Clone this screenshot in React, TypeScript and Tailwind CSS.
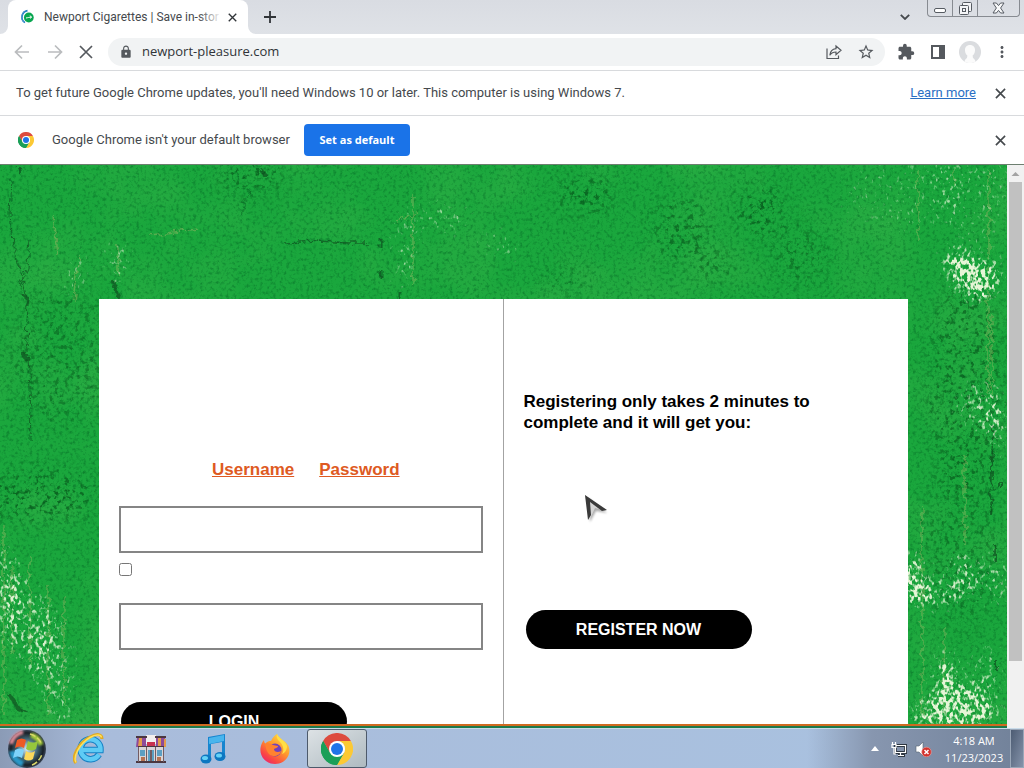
import React from 'react';
import { MdExtension, MdLock, MdMoreVert, MdStarBorder } from 'react-icons/md';

function CrossIcon({ className }: { className: string }) {
  return (
    <svg viewBox="0 0 12 12" className={className} fill="none" stroke="currentColor" strokeWidth="1.8" aria-hidden="true">
      <path d="M1 1l10 10M11 1L1 11" />
    </svg>
  );
}

function ChromeLogo({ className }: { className: string }) {
  return (
    <svg viewBox="0 0 48 48" className={className} aria-hidden="true">
      <path d="M24 24L3.2 12A24 24 0 0 1 44.8 12L24 12z" fill="#dd4b3e" />
      <path d="M3.2 12A24 24 0 0 0 24 48L34.4 30 24 24 13.6 30z" fill="#1a9f58" />
      <path d="M44.8 12A24 24 0 0 1 24 48L34.4 30A12 12 0 0 0 24 12z" fill="#fcc934" />
      <path d="M3.2 12L13.6 30 24 24V12z" fill="#dd4b3e" />
      <path d="M3.2 12A24 24 0 0 0 24 48L34.4 30A12 12 0 0 1 13.6 30z" fill="#1a9f58" />
      <circle cx="24" cy="24" r="12" fill="#fff" />
      <circle cx="24" cy="24" r="9" fill="#1f74e8" />
    </svg>
  );
}

function TabStrip() {
  return (
    <header className="flex h-[34px] shrink-0 items-stretch bg-gradient-to-b from-[#d9dce2] to-[#dfe2e7] pl-2">
      <div className="relative flex w-60 items-center rounded-t-lg bg-white pl-3 pr-[10px] text-[#45494d]">
        <svg viewBox="0 0 8 8" className="absolute -left-2 bottom-0 h-2 w-2" aria-hidden="true">
          <path d="M8 0v8H0A8 8 0 0 0 8 0z" fill="#fff" />
        </svg>
        <svg viewBox="0 0 8 8" className="absolute -right-2 bottom-0 h-2 w-2" aria-hidden="true">
          <path d="M0 0v8h8A8 8 0 0 1 0 0z" fill="#fff" />
        </svg>
        <svg viewBox="0 0 16 16" className="h-4 w-4 shrink-0" fill="none" aria-hidden="true">
          <circle cx="8.800" cy="8.500" r="4.900" fill="#08a650" />
          <path d="M6 9c2-.3 3-.8 5.500-.9M9.800 6.600l1.800 1.500-1.500 1.300" stroke="#fff" strokeWidth="1" />
          <path d="M7.500 1.600a6.600 6.600 0 0 0-2.600 12" stroke="#1d7bc2" strokeWidth="1.6" />
          <path d="M4.500 2.200a7.400 7.400 0 0 0-.8 11" stroke="#4f97d2" strokeWidth="1" />
        </svg>
        <span className="relative ml-2 flex-1 overflow-hidden whitespace-nowrap font-[Roboto,'Segoe_UI',sans-serif] text-xs">
          Newport Cigarettes | Save in-stor
          <span className="absolute inset-y-0 right-0 w-6 bg-gradient-to-r from-transparent to-white" />
        </span>
        <button type="button" aria-label="Close tab" className="ml-1 flex h-4 w-3 items-center justify-center text-[#303438]">
          <CrossIcon className="h-[9px] w-[9px]" />
        </button>
      </div>
      <button type="button" aria-label="New tab" className="ml-2 w-7 text-[#303438]">
        <svg viewBox="0 0 12 12" className="mx-auto h-3 w-3" stroke="currentColor" strokeWidth="1.8" aria-hidden="true">
          <path d="M6 0v12M0 6h12" />
        </svg>
      </button>
      <button type="button" aria-label="Search tabs" className="ml-auto mr-3 w-5 text-[#45494d]">
        <svg viewBox="0 0 10 6" className="mx-auto h-[6px] w-[10px]" fill="none" stroke="currentColor" strokeWidth="1.8" aria-hidden="true">
          <path d="M.8.8L5 5 9.2.8" />
        </svg>
      </button>
      <div className="mr-1 flex h-[17px] overflow-hidden rounded-b border border-t-0 border-[#878b91] text-[#565b62]">
        <button type="button" aria-label="Minimize" className="flex w-6 items-end justify-center pb-[3px]">
          <svg viewBox="0 0 12 5" className="h-[5px] w-3" fill="#fff" stroke="currentColor" aria-hidden="true">
            <rect x=".5" y=".5" width="11" height="4" rx="1.5" />
          </svg>
        </button>
        <button type="button" aria-label="Restore" className="flex w-[26px] items-center justify-center border-x border-[#878b91]">
          <svg viewBox="0 0 13 13" className="h-[13px] w-[13px]" fill="#f4f5f7" stroke="currentColor" aria-hidden="true">
            <rect x="3.5" y=".5" width="9" height="9" rx="1" />
            <rect x=".5" y="3.5" width="9" height="9" rx="1" />
            <rect x="3.5" y="6.5" width="3" height="3" />
          </svg>
        </button>
        <button type="button" aria-label="Close window" className="flex w-[41px] items-center justify-center">
          <svg viewBox="0 0 13 12" className="h-3 w-[13px]" fill="#f8f9fa" stroke="currentColor" aria-hidden="true">
            <path d="M1 1h3.400l2.100 2.600L8.600 1H12L8.600 6 12 11H8.600L6.500 8.400 4.400 11H1l3.400-5z" />
          </svg>
        </button>
      </div>
    </header>
  );
}

function Toolbar() {
  return (
    <div className="flex h-9 shrink-0 items-center bg-white text-[#55595e]">
      <div className="flex w-[108px] shrink-0 justify-between pl-[14px] pr-[15px]">
        <button type="button" aria-label="Back" className="text-[#babcbe]">
          <svg viewBox="0 0 16 16" className="h-4 w-4" fill="none" stroke="currentColor" strokeWidth="1.7" aria-hidden="true">
            <path d="M15 8H2M8 1.500L1.500 8 8 14.500" />
          </svg>
        </button>
        <button type="button" aria-label="Forward" className="text-[#babcbe]">
          <svg viewBox="0 0 16 16" className="h-4 w-4" fill="none" stroke="currentColor" strokeWidth="1.7" aria-hidden="true">
            <path d="M1 8h13M8 1.500L14.500 8 8 14.500" />
          </svg>
        </button>
        <button type="button" aria-label="Stop loading">
          <svg viewBox="0 0 14 14" className="h-[14px] w-[14px]" fill="none" stroke="currentColor" strokeWidth="1.7" aria-hidden="true">
            <path d="M1 1l12 12M13 1L1 13" />
          </svg>
        </button>
      </div>
      <div className="flex h-7 flex-1 items-center rounded-full bg-[#f1f3f4] pl-[11px] pr-[10px]">
        <MdLock className="h-[14px] w-[14px] shrink-0" />
        <input
          type="text"
          aria-label="Address"
          defaultValue="newport-pleasure.com"
          className="ml-[9px] min-w-0 flex-1 bg-transparent text-[13px] text-[#303438] outline-none"
        />
        <button type="button" aria-label="Share this page">
          <svg viewBox="0 0 16 16" className="h-4 w-4" fill="none" stroke="currentColor" strokeWidth="1.2" aria-hidden="true">
            <path d="M1 4.500v10h11.500v-3" />
            <path d="M10 2l5 4.300-5 4.300V8c-2.800 0-4.700 1-6.200 3.200C4.200 7.300 6.500 5 10 4.600z" />
          </svg>
        </button>
        <button type="button" aria-label="Bookmark this tab" className="ml-[15px]">
          <MdStarBorder className="h-[18px] w-[18px]" />
        </button>
      </div>
      <div className="ml-3 mr-[13px] flex shrink-0 items-center">
        <button type="button" aria-label="Extensions">
          <MdExtension className="h-[18px] w-[18px]" />
        </button>
        <button type="button" aria-label="Side panel" className="ml-4">
          <svg viewBox="0 0 14 14" className="h-[14px] w-[14px]" aria-hidden="true">
            <path d="M0 0h14v14H0zM2 2v10h6V2z" fill="currentColor" fillRule="evenodd" />
          </svg>
        </button>
        <button type="button" aria-label="Profile" className="ml-[14px]">
          <svg viewBox="0 0 22 22" className="h-[22px] w-[22px]" aria-hidden="true">
            <circle cx="11" cy="11" r="11" fill="#dadcdf" />
            <path d="M11 4c-3.500 0-5.200 2.400-5 5.500.1 2.400 1 4 2.400 5L8 17c-1 .8-2 1.500-2.500 3.500a11 11 0 0 0 11 0C16 18.500 15 17.800 14 17l-.4-2.500c1.400-1 2.300-2.600 2.400-5C16.200 6.400 14.500 4 11 4z" fill="#fbfbfb" />
          </svg>
        </button>
        <button type="button" aria-label="Customize and control" className="ml-3">
          <MdMoreVert className="h-[18px] w-[18px]" />
        </button>
      </div>
    </div>
  );
}

function InfoBars() {
  return (
    <div className="shrink-0 font-[Roboto,'Segoe_UI',sans-serif] text-[13px] text-[#45494d]">
      <div className="flex h-[45px] items-center border-t border-[#d8dadd] bg-white pl-4 pr-[18px]">
        <p>To get future Google Chrome updates, you'll need Windows 10 or later. This computer is using Windows 7.</p>
        <a href="#learn-more" className="ml-auto text-[#2a6fc4] underline">Learn more</a>
        <button type="button" aria-label="Dismiss update notice" className="ml-[19px]">
          <CrossIcon className="h-[11px] w-[11px]" />
        </button>
      </div>
      <div className="flex h-[50px] items-center border-b border-t border-b-[#6d7f70] border-t-[#d8dadd] bg-white pl-[18px] pr-[18px]">
        <ChromeLogo className="h-4 w-4" />
        <p className="ml-[18px] min-w-60">Google Chrome isn't your default browser</p>
        <button type="button" className="ml-3 h-8 w-[106px] rounded bg-[#1a73e8] font-['Open_Sans','Segoe_UI',sans-serif] text-[11px] font-bold text-white">
          Set as default
        </button>
        <button type="button" aria-label="Dismiss default browser prompt" className="ml-auto">
          <CrossIcon className="h-[11px] w-[11px]" />
        </button>
      </div>
    </div>
  );
}

// Green painted concrete: grain, cracks and worn white patches
function PaintedWall() {
  return (
    <svg
      viewBox="0 0 1007 559"
      preserveAspectRatio="xMidYMin slice"
      className="absolute inset-0 h-full w-full"
      aria-hidden="true"
    >
      <defs>
        <filter id="grain" x="0" y="0" width="100%" height="100%" colorInterpolationFilters="sRGB">
          <feTurbulence type="fractalNoise" baseFrequency="0.3" numOctaves="3" seed="4" />
          <feColorMatrix values="0 0 0 0 0.02  0 0 0 0 0.42  0 0 0 0 0.15  3 0 0 0 -1.45" />
        </filter>
        <filter id="light" x="0" y="0" width="100%" height="100%" colorInterpolationFilters="sRGB">
          <feTurbulence type="fractalNoise" baseFrequency="0.012" numOctaves="4" seed="9" />
          <feColorMatrix values="0 0 0 0 0.23  0 0 0 0 0.7  0 0 0 0 0.29  3 0 0 0 -1.3" />
        </filter>
        <filter id="pits" x="-20%" y="-20%" width="140%" height="140%" colorInterpolationFilters="sRGB">
          <feGaussianBlur in="SourceGraphic" stdDeviation="10" result="s" />
          <feTurbulence type="fractalNoise" baseFrequency="0.2" numOctaves="3" seed="12" />
          <feColorMatrix values="0 0 0 0 0.02  0 0 0 0 0.32  0 0 0 0 0.1  6 0 0 0 -3.300" />
          <feComposite operator="in" in2="s" />
        </filter>
        <filter id="worn" x="0" y="0" width="1007" height="559" filterUnits="userSpaceOnUse" colorInterpolationFilters="sRGB">
          <feGaussianBlur in="SourceGraphic" stdDeviation="9" result="s" />
          <feTurbulence type="fractalNoise" baseFrequency="0.28 0.2" numOctaves="2" seed="21" />
          <feColorMatrix values="0 0 0 0 1  0 0 0 0 1  0 0 0 0 1  1 0 0 0 0" result="n" />
          <feComposite in="n" in2="s" operator="arithmetic" k2="5" k3="2" k4="-3.900" />
          <feComposite in2="s" operator="in" result="c" />
          <feColorMatrix in="c" values="0 0 0 0 0.9  0 0 0 0 0.96  0 0 0 0 0.84  0 0 0 1.300 0" />
        </filter>
        <filter id="rough" x="-30%" y="-30%" width="160%" height="160%">
          <feTurbulence type="fractalNoise" baseFrequency="0.15" numOctaves="3" seed="3" />
          <feDisplacementMap in="SourceGraphic" scale="9" />
        </filter>
      </defs>
      <rect width="1007" height="559" fill="#1aa73d" />
      <rect width="1007" height="559" filter="url(#light)" opacity="0.4" />
      <rect width="1007" height="559" filter="url(#grain)" opacity="0.5" />
      <g filter="url(#pits)" opacity="0.75">
        <ellipse cx="250" cy="10" rx="34" ry="18" />
        <ellipse cx="60" cy="190" rx="50" ry="70" opacity="0.6" />
        <ellipse cx="760" cy="45" rx="26" ry="26" />
        <ellipse cx="800" cy="90" rx="30" ry="30" opacity="0.7" />
        <ellipse cx="585" cy="30" rx="30" ry="20" />
        <ellipse cx="680" cy="65" rx="30" ry="35" opacity="0.8" />
        <ellipse cx="715" cy="100" rx="20" ry="16" opacity="0.8" />
        <ellipse cx="565" cy="115" rx="22" ry="14" opacity="0.8" />
        <ellipse cx="965" cy="220" rx="40" ry="110" opacity="0.8" />
        <ellipse cx="960" cy="380" rx="40" ry="90" opacity="0.6" />
        <ellipse cx="40" cy="330" rx="60" ry="26" />
      </g>
      <g fill="none" stroke="#0b421b" filter="url(#rough)" opacity="0.6">
        <path d="M12 15l-2 35 3 28 8 30 7 32-2 35 3 30 2 40-1 30" />
        <path d="M30 75l-2 28-8 18" />
        <path d="M284 78l35-2 30 2h18" strokeWidth="1.500" />
        <path d="M249 25l-7 25" strokeWidth="2" opacity="0.5" />
        <path d="M381 74v9M381 105v8M113 116l6 18M400 127v8" strokeWidth="3" />
        <path d="M261 5l4 5M20 3l1 6M26 131l3 12M24 188l3 8" strokeWidth="4" />
        <path d="M10 530l8 14 9 4" strokeWidth="4" />
        <path d="M995 380v16M996 495v10M993 260l-2 90M1000 315v8" strokeWidth="2" />
      </g>
      <g stroke="#94b663" filter="url(#rough)" opacity="0.5">
        <path d="M413 30v90M53 50l4 40M118 80v30M80 90l-6 45M150 70l48-6M395 55l24-6M918 5v70M954 0v20M989 5v90" strokeWidth="1.500" />
        <path d="M4 360v190M12 400v90M30 390v110M48 420v130M64 430v110M965 290v90M988 100v130M922 340v210M944 460v90M992 150v80" strokeWidth="1.500" />
      </g>
      <g filter="url(#worn)" fill="#fff">
        <ellipse cx="968" cy="110" rx="20" ry="34" transform="rotate(-40 968 110)" />
        <ellipse cx="966" cy="106" rx="14" ry="26" transform="rotate(-40 966 106)" />
        <ellipse cx="992" cy="110" rx="12" ry="26" opacity="0.7" />
        <ellipse cx="6" cy="430" rx="12" ry="60" opacity="0.7" />
        <ellipse cx="28" cy="460" rx="22" ry="60" opacity="0.55" transform="rotate(-12 28 460)" />
        <ellipse cx="56" cy="500" rx="22" ry="70" opacity="0.55" transform="rotate(-5 56 500)" />
        <ellipse cx="912" cy="415" rx="14" ry="30" />
        <ellipse cx="934" cy="430" rx="24" ry="16" opacity="0.7" />
        <ellipse cx="964" cy="412" rx="18" ry="28" opacity="0.7" />
        <ellipse cx="998" cy="412" rx="14" ry="34" opacity="0.6" />
        <ellipse cx="962" cy="545" rx="40" ry="22" opacity="0.9" />
        <ellipse cx="946" cy="515" rx="12" ry="34" />
        <ellipse cx="985" cy="510" rx="18" ry="34" opacity="0.6" />
        <ellipse cx="980" cy="240" rx="26" ry="28" opacity="0.6" />
        <ellipse cx="998" cy="260" rx="10" ry="36" opacity="0.7" />
        <ellipse cx="900" cy="30" rx="60" ry="40" opacity="0.35" />
        <ellipse cx="975" cy="20" rx="40" ry="60" opacity="0.4" />
        <ellipse cx="405" cy="85" rx="12" ry="46" opacity="0.6" />
        <ellipse cx="445" cy="52" rx="28" ry="18" opacity="0.5" />
        <ellipse cx="500" cy="80" rx="26" ry="12" opacity="0.55" />
        <ellipse cx="118" cy="95" rx="10" ry="30" opacity="0.7" />
        <ellipse cx="75" cy="110" rx="12" ry="26" opacity="0.55" />
        <ellipse cx="925" cy="550" rx="20" ry="20" opacity="0.7" />
      </g>
    </svg>
  );
}

function LoginPage() {
  return (
    <main className="relative min-h-0 flex-1 overflow-hidden bg-[#1ba43d] px-[99px] pt-[134px] font-['Liberation_Sans',Arial,sans-serif]">
      <PaintedWall />
      <div className="relative grid min-h-[520px] grid-cols-2 bg-white">
        <form className="border-r border-[#a3a3a3] px-5 pt-40">
          <nav className="flex justify-center gap-[25px] pl-[10px] text-[17px] font-bold leading-[22px] text-[#de5a22]">
            <a href="#username" className="underline">Username</a>
            <a href="#password" className="underline">Password</a>
          </nav>
          <input type="text" aria-label="Username" className="mt-[25px] block h-[47px] w-full border-2 border-[#858585] bg-white px-3" />
          <input type="checkbox" aria-label="Remember me" className="mt-[10px] block h-[13px] w-[13px]" />
          <input type="password" aria-label="Password" className="mt-[27px] block h-[47px] w-full border-2 border-[#858585] bg-white px-3" />
          <button type="submit" className="ml-[2px] mt-[52px] block h-[39px] w-[226px] rounded-full bg-black text-base font-bold text-white">
            LOGIN
          </button>
        </form>
        <section className="px-5 pt-[92px]">
          <h2 className="max-w-[300px] text-[17px] font-bold leading-[21px] text-black">
            Registering only takes 2 minutes to complete and it will get you:
          </h2>
          <button type="button" className="ml-[2px] mt-[177px] block h-[39px] w-[226px] rounded-full bg-black text-base font-bold text-white">
            REGISTER NOW
          </button>
        </section>
      </div>
      <svg viewBox="0 0 26 32" className="absolute left-[583px] top-[328px] h-8 w-[26px]" aria-hidden="true">
        <defs>
          <filter id="soft">
            <feGaussianBlur stdDeviation="1.300" />
          </filter>
        </defs>
        <path d="M5 5l19 15-11-2-6 11z" fill="#777" opacity="0.6" filter="url(#soft)" />
        <path d="M2 2l21 16-11-3-5 11z" fill="#d4d4d4" />
        <path d="M2 2l22 15-5 1L7 9 8 22l-3 5z" fill="#3a3a3a" />
      </svg>
    </main>
  );
}

function ScrollBar() {
  return (
    <div className="flex w-[17px] shrink-0 flex-col items-center bg-[#f1f1f1]" aria-hidden="true">
      <svg viewBox="0 0 17 17" className="h-[17px] w-[17px] shrink-0">
        <path d="M4.500 11L8.500 7l4 4z" fill="#a3a3a3" />
      </svg>
      <div className="h-[85%] w-[13px] bg-[#c1c1c1]" />
    </div>
  );
}

function StartOrb() {
  return (
    <svg viewBox="0 0 40 40" className="h-10 w-10" aria-hidden="true">
      <defs>
        <radialGradient id="orb">
          <stop offset="0" stopColor="#d8efff" />
          <stop offset="0.55" stopColor="#3f6270" />
          <stop offset="0.85" stopColor="#182027" />
          <stop offset="1" stopColor="#3c4757" />
        </radialGradient>
        <filter id="glow">
          <feGaussianBlur stdDeviation="1.200" />
        </filter>
      </defs>
      <circle cx="20" cy="20" r="19" fill="url(#orb)" />
      <g fill="none" filter="url(#glow)">
        <path d="M4 15A17 17 0 0 1 16 3" stroke="#d88a95" strokeWidth="4" />
        <path d="M24 6a15 15 0 0 1 10 10" stroke="#a5ce3c" strokeWidth="5" />
        <path d="M5 22a16 16 0 0 0 11 13" stroke="#2b98c8" strokeWidth="6" />
      </g>
      <path d="M25 36a17 17 0 0 0 10-11M23 5a17 17 0 0 1 11 9" stroke="#d9d76a" strokeWidth="1.500" fill="none" strokeDasharray="6 2" />
      <path d="M10 11c3-2 6-2 9 0l-2 8c-3-2-6-2-9 0z" fill="#ee5a25" />
      <path d="M21 12c3 2 6 2 10 0l-2 8c-4 2-7 2-10 0z" fill="#96c83c" />
      <path d="M8 21c3-2 6-2 9 0l-2 8c-3-2-6-2-9 0z" fill="#7fd3fa" />
      <path d="M19 22c3 2 6 2 9 0l-2 8c-3 2-6 2-9 0z" fill="#fbd95c" />
    </svg>
  );
}

function ExplorerIcon() {
  return (
    <svg viewBox="0 0 32 32" className="h-8 w-8" fill="none" aria-hidden="true">
      <path d="M26 21.500a10 10 0 1 1 1.500-4.500H9" stroke="#1681c4" strokeWidth="6.500" />
      <path d="M26 21.500a10 10 0 1 1 1.500-4.500H9" stroke="#5ecbf5" strokeWidth="4.500" />
      <path d="M3 30C-2 25 5 10 17 4c7-4 12-3 12 2" stroke="#e0aa22" strokeWidth="3" />
      <path d="M3 29.500C0 24 6 11 17 4.500c6-3.500 11-3 11.500 0" stroke="#ffe05c" strokeWidth="1.500" />
    </svg>
  );
}

function ShopIcon() {
  return (
    <svg viewBox="0 0 32 32" className="h-8 w-8" aria-hidden="true">
      <path d="M3 14h26v15H3z" fill="#d9d5d8" />
      <path d="M11 2h10v9H11z" fill="#f3efee" />
      <path d="M2 5h9v9H1zM21 5h9l1 9H21z" fill="#8d4b9a" />
      <path d="M4 5h3v9H3zM23 5h3v9h-3zM29 6h2v8h-2z" fill="#e39a4b" />
      <path d="M12 9h8v5h-8z" fill="#c8324e" />
      <path d="M1 3h11v2H1zM20 3h11v2H20zM3 13h26v1H3zM1 28h30v2H1z" fill="#4b3740" />
      <path d="M13 17h6v11h-6zM5 17h5v6H5zM22 17h5v6h-5z" fill="#5c9fc3" />
      <path d="M15 17h2v11h-2zM3 14h1v15H3zM11 14h1v14h-1zM20 14h1v14h-1zM28 14h1v15h-1z" fill="#735c62" />
      <path d="M6 24h4v4H6zM22 24h4v4h-4z" fill="#b57252" />
    </svg>
  );
}

function MusicIcon() {
  return (
    <svg viewBox="0 0 28 32" className="h-8 w-7" aria-hidden="true">
      <path d="M9 4l17-3v23h-3V9L12 11v16H9z" fill="#1685cf" />
      <path d="M10 5l15-3v6L10 11z" fill="#49b5ed" />
      <ellipse cx="7" cy="26" rx="5.500" ry="4.500" fill="#0d77c1" />
      <ellipse cx="21" cy="23.500" rx="5.500" ry="4.500" fill="#0d77c1" />
      <ellipse cx="6" cy="25" rx="3" ry="2" fill="#65d2f7" />
      <ellipse cx="20" cy="22.500" rx="3" ry="2" fill="#65d2f7" />
    </svg>
  );
}

function FirefoxIcon() {
  return (
    <svg viewBox="0 0 32 32" className="h-8 w-8" aria-hidden="true">
      <defs>
        <linearGradient id="fox" x1="0.9" y1="0" x2="0.2" y2="1">
          <stop offset="0" stopColor="#ffe84a" />
          <stop offset="0.45" stopColor="#ff9a2b" />
          <stop offset="0.8" stopColor="#fa4545" />
          <stop offset="1" stopColor="#e92271" />
        </linearGradient>
      </defs>
      <path d="M5 7c0 2 .5 3 1.500 3.500C8 8.500 10 8 12 8c2-4 4-6 6-7 1 4 9 7 11.500 12C33 22 26 31 16 31S.5 23 1.500 15C2 12 3 9 5 7z" fill="url(#fox)" />
      <path d="M18 1c-1 4 1 6 3 8 4 4 4 9 2 12 3-1 5-4 5-8-1-5-8-7-10-12z" fill="#ffdf45" />
      <circle cx="16" cy="17" r="6.500" fill="#7141bb" />
      <path d="M6 11c4-2 6 0 8 1l5 1c0 2-3 2-4 3 0 3 4 4 7 2-1 5-8 7-12 3-3-3-3-7-4-10z" fill="#ff8230" />
    </svg>
  );
}

const apps = [
  { name: 'Internet Explorer', icon: <ExplorerIcon /> },
  { name: 'Store', icon: <ShopIcon /> },
  { name: 'Music', icon: <MusicIcon /> },
  { name: 'Firefox', icon: <FirefoxIcon /> },
];

function Taskbar() {
  return (
    <footer className="flex h-10 shrink-0 items-stretch border-t border-[#c9dbe9] bg-gradient-to-r from-[#8b9bb6] via-[#a9bcdb] via-10% to-[#a9c2e0]">
      <button type="button" aria-label="Start" className="ml-[7px] w-10">
        <StartOrb />
      </button>
      <div className="ml-[11px] flex">
        {apps.map((app) => (
          <button key={app.name} type="button" aria-label={app.name} className="flex w-[62px] items-center justify-center">
            {app.icon}
          </button>
        ))}
        <button
          type="button"
          aria-label="Google Chrome"
          className="ml-px flex w-[60px] items-center justify-center rounded-[3px] border border-[#4d5a6b] bg-gradient-to-br from-[#dde2e5] to-[#aebac0]"
        >
          <ChromeLogo className="h-8 w-8" />
        </button>
      </div>
      <div className="ml-auto flex items-center bg-gradient-to-r from-transparent via-[#8796af] via-30% to-[#718199] pl-16 text-white">
        <button type="button" aria-label="Show hidden icons">
          <svg viewBox="0 0 8 5" className="h-[5px] w-2" aria-hidden="true">
            <path d="M0 5l4-5 4 5z" fill="#fff" />
          </svg>
        </button>
        <button type="button" aria-label="Network" className="ml-3">
          <svg viewBox="0 0 16 16" className="h-4 w-4" fill="none" aria-hidden="true">
            <path d="M4.500 4.500h10v7h-10zM7 14.500h7" stroke="#2e3742" strokeWidth="3" />
            <path d="M5 4.500h9.500v7H4.500v-5M7 14.500h6M9.500 12v2M1 3.500h4v3H1zM1.500 1v2M4.500 1v2M3 7v6h2" stroke="#fff" strokeWidth="1.200" />
          </svg>
        </button>
        <button type="button" aria-label="Volume muted" className="ml-2">
          <svg viewBox="0 0 17 16" className="h-4 w-[17px]" aria-hidden="true">
            <path d="M1 5h3l4-4v14l-4-4H1z" fill="#fff" stroke="#56616f" strokeWidth="0.600" />
            <circle cx="11.500" cy="11" r="4.800" fill="#d2322d" stroke="#f2a5a0" strokeWidth="0.600" />
            <path d="M9.500 9l4 4M13.500 9l-4 4" stroke="#fff" strokeWidth="1.500" />
          </svg>
        </button>
        <time className="ml-3 w-[60px] whitespace-nowrap text-center text-[11px] leading-[17px]">
          4:18 AM
          <br />
          11/23/2023
        </time>
        <button
          type="button"
          aria-label="Show desktop"
          className="ml-[6px] h-full w-[14px] border border-[#9aa7b8] bg-gradient-to-br from-[#4d5c73] to-[#8593aa]"
        />
      </div>
    </footer>
  );
}

export default function App() {
  return (
    <div className="flex h-screen flex-col overflow-hidden bg-white font-['Open_Sans','Segoe_UI',sans-serif]">
      <TabStrip />
      <Toolbar />
      <InfoBars />
      <div className="flex min-h-0 flex-1">
        <div className="flex min-w-0 flex-1 flex-col">
          <LoginPage />
          <div className="h-1 shrink-0 border-t-2 border-[#cf6a20] bg-[#1c7a4c]" />
        </div>
        <ScrollBar />
      </div>
      <Taskbar />
    </div>
  );
}
